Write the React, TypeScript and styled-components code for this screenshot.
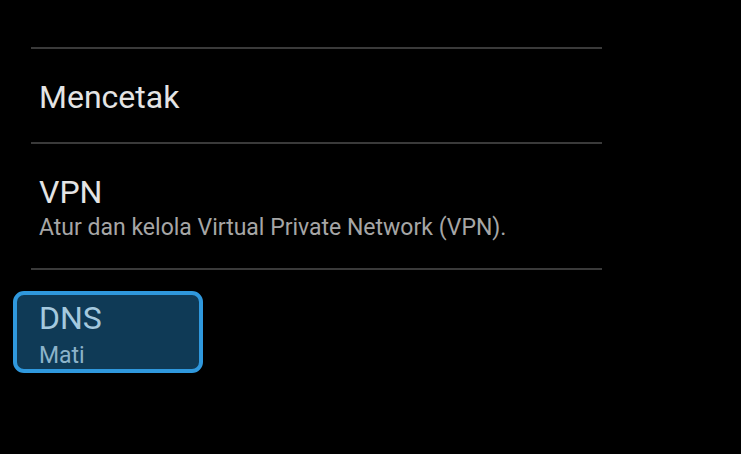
import React from "react";
import styled, { createGlobalStyle } from "styled-components";

const GlobalStyle = createGlobalStyle`
  html, body {
    margin: 0;
    padding: 0;
    background: #000;
  }
  body {
    font-family: Roboto, "Noto Sans", "Liberation Sans", sans-serif;
    width: 741px;
    height: 454px;
    overflow: hidden;
  }
`;

const Screen = styled.div`
  width: 741px;
  height: 454px;
  background: #000;
  box-sizing: border-box;
  padding-top: 47px;
`;

const List = styled.div`
  margin-left: 31px;
  width: 571px;
  display: flex;
  flex-direction: column;
`;

const Divider = styled.div`
  height: 2px;
  background: #3a3a3a;
`;

const Row = styled.div<{ $height: number }>`
  box-sizing: border-box;
  height: ${(p) => p.$height}px;
  padding: 30px 0 0 8px;
  display: flex;
  flex-direction: column;
`;

const Title = styled.div<{ $focused?: boolean }>`
  font-size: 32px;
  line-height: 36px;
  color: ${(p) => (p.$focused ? "#a4c9df" : "#e4e4e4")};
  white-space: nowrap;
`;

const Summary = styled.div<{ $focused?: boolean }>`
  font-size: 23px;
  line-height: 26px;
  margin-top: ${(p) => (p.$focused ? 7 : 5)}px;
  color: ${(p) => (p.$focused ? "#8cb3ca" : "#a6a6a6")};
  white-space: nowrap;
`;

const FocusRow = styled.div`
  padding-top: 21px;
  display: flex;
`;

const FocusBox = styled.div`
  box-sizing: border-box;
  width: 190px;
  height: 82px;
  margin-left: -18px;
  padding: 5px 0 0 22px;
  background: #0f3a56;
  border: 4px solid #2f98dd;
  border-radius: 11px;
  display: flex;
  flex-direction: column;
`;

export default function App() {
  return (
    <>
      <GlobalStyle />
      <Screen>
        <List>
          <Divider />
          <Row $height={93}>
            <Title>Mencetak</Title>
          </Row>
          <Divider />
          <Row $height={124}>
            <Title>VPN</Title>
            <Summary>Atur dan kelola Virtual Private Network (VPN).</Summary>
          </Row>
          <Divider />
          <FocusRow>
            <FocusBox>
              <Title $focused>DNS</Title>
              <Summary $focused>Mati</Summary>
            </FocusBox>
          </FocusRow>
        </List>
      </Screen>
    </>
  );
}
